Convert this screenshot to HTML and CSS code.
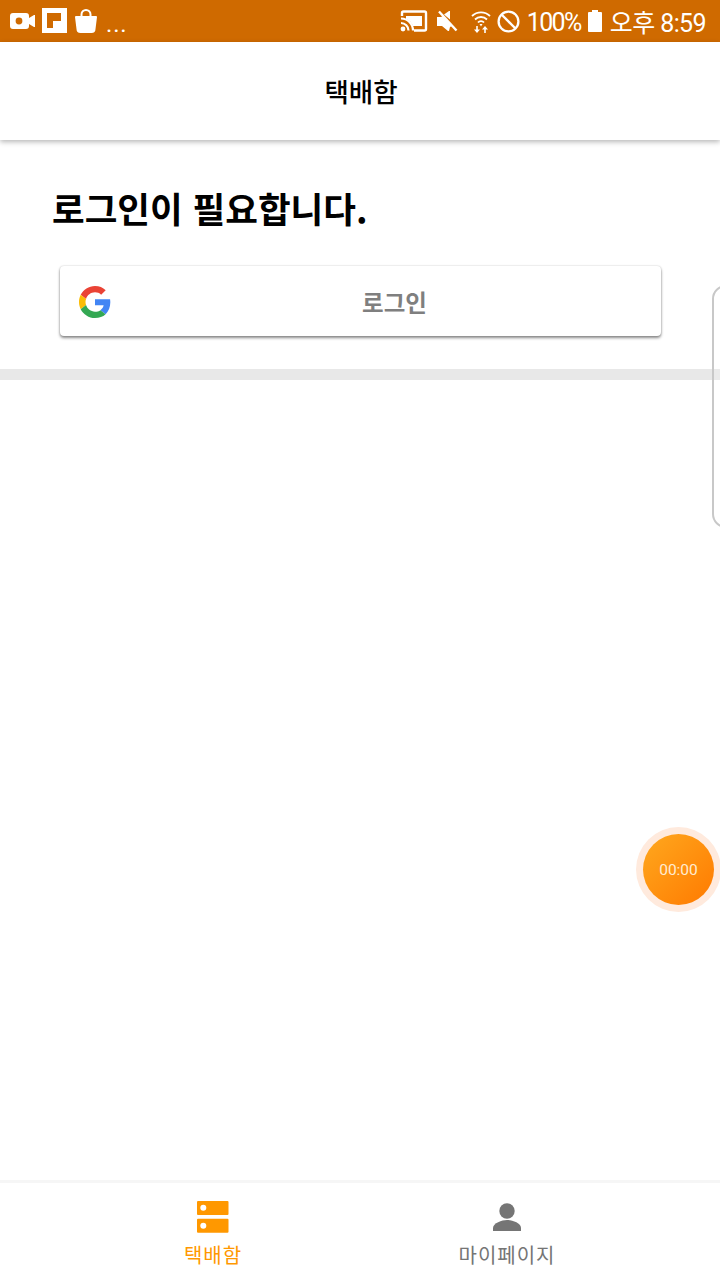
FILE: index.html
```html
<!DOCTYPE html>
<html lang="ko">
<head>
<meta charset="utf-8">
<title>택배함</title>
<link rel="stylesheet" href="styles.css">
</head>
<body>
<div class="app">
  <div class="status">
    <div class="status-left">
      <svg class="i-video" width="26" height="18" viewBox="0 0 26 18"><path fill="#fff" d="M3 1h13a3 3 0 0 1 3 3v2l5-3h1v12h-1l-5-3v2a3 3 0 0 1-3 3H3a3 3 0 0 1-3-3V4a3 3 0 0 1 3-3z"/><circle cx="9" cy="9" r="3.400" fill="#cf6a00"/></svg>
      <svg class="i-flip" width="25" height="25" viewBox="0 0 25 25"><path fill="#fff" fill-rule="evenodd" d="M0 0h25v25H0zM5 5v15h6v-7h8V5z"/></svg>
      <svg class="i-bag" width="22" height="24" viewBox="0 0 22 24"><path fill="none" stroke="#fff" stroke-width="2" d="M6.500 8V5.500a4.500 4.500 0 0 1 9 0V8"/><path fill="#fff" d="M1 7h20a1 1 0 0 1 1 1l-1.500 12a4 4 0 0 1-4 4h-11a4 4 0 0 1-4-4L0 8a1 1 0 0 1 1-1z"/></svg>
      <span class="dots">...</span>
    </div>
    <div class="status-right">
      <svg width="28" height="22" viewBox="0 0 28 22"><path fill="none" stroke="#fff" stroke-width="2.400" d="M2 6V3a1.500 1.500 0 0 1 1.500-1.500h21A1.500 1.500 0 0 1 26 3v16a1.500 1.500 0 0 1-1.500 1.500H14"/><path fill="#fff" d="M6 6h16v10H13a12 12 0 0 0-7-7z"/><path fill="none" stroke="#fff" stroke-width="2.200" d="M1 8.500a12 12 0 0 1 12 12M1 13a7.500 7.500 0 0 1 7.500 7.500"/><circle cx="3" cy="19" r="2.400" fill="#fff"/></svg>
      <svg class="i-mute" width="23" height="22" viewBox="0 0 23 22"><path fill="#fff" d="M1 7h4l2-1 9 10-2 1-1 4-1 0-6-5H1z"/><path fill="#fff" d="M8 4.500L13 1h1v8.500z"/><path stroke="#fff" stroke-width="2.400" d="M3 1.500l17.500 19"/></svg>
      <svg class="i-wifi" width="20" height="24" viewBox="0 0 20 24"><g fill="none" stroke="#fff" stroke-width="1.800"><path d="M1 7a13 13 0 0 1 18 0"/><path d="M4 10.500a8.500 8.500 0 0 1 12 0"/><path d="M7 13.500a4 4 0 0 1 6 0"/></g><path fill="#fff" d="M8.500 15h3L10 17.500zM5.200 17h1.600v3.500H9L6 24l-3-3.500h2.200zM14 17l3 3.500h-2.200V24h-1.600v-3.500H11z"/></svg>
      <svg class="i-block" width="23" height="23" viewBox="0 0 23 23"><circle cx="11.500" cy="11.500" r="9.900" fill="none" stroke="#fff" stroke-width="2.300"/><path stroke="#fff" stroke-width="2.300" d="M4.500 4.500l14 14"/></svg>
      <span class="pct">100%</span>
      <svg class="i-batt" width="14" height="22" viewBox="0 0 14 22"><path fill="#fff" d="M4 0h6v2h3a1 1 0 0 1 1 1v18a1 1 0 0 1-1 1H1a1 1 0 0 1-1-1V3a1 1 0 0 1 1-1h3z"/></svg>
      <span class="clock">오후 8:59</span>
    </div>
  </div>

  <header class="topbar">택배함</header>

  <section class="login">
    <h1 class="login-title">로그인이 필요합니다.</h1>
    <button class="google-btn" type="button">
      <svg class="g-logo" width="32" height="32" viewBox="0 0 48 48">
        <path fill="#EA4335" d="M24 9.500c3.540 0 6.710 1.220 9.210 3.600l6.850-6.850C35.900 2.380 30.470 0 24 0 14.620 0 6.510 5.380 2.560 13.220l7.980 6.190C12.430 13.720 17.740 9.500 24 9.500z"/>
        <path fill="#4285F4" d="M46.980 24.550c0-1.570-.15-3.090-.38-4.550H24v9.020h12.940c-.58 2.960-2.260 5.480-4.780 7.180l7.730 6c4.510-4.180 7.090-10.360 7.090-17.650z"/>
        <path fill="#FBBC05" d="M10.530 28.590c-.48-1.450-.76-2.990-.76-4.590s.27-3.140.76-4.590l-7.980-6.190C.92 16.460 0 20.120 0 24c0 3.880.92 7.540 2.560 10.780l7.970-6.190z"/>
        <path fill="#34A853" d="M24 48c6.480 0 11.930-2.130 15.890-5.810l-7.730-6c-2.150 1.450-4.920 2.300-8.160 2.300-6.260 0-11.570-4.220-13.470-9.910l-7.980 6.190C6.510 42.620 14.620 48 24 48z"/>
      </svg>
      <span class="google-label">로그인</span>
    </button>
  </section>
  <div class="divider"></div>

  <main class="content"></main>

  <nav class="tabbar">
    <div class="tab tab-active">
      <svg width="34" height="34" viewBox="0 0 34 34"><path fill="#ff9800" fill-rule="evenodd" d="M2 1h29.500a1 1 0 0 1 1 1v12a1 1 0 0 1-1 1H2a1 1 0 0 1-1-1V2a1 1 0 0 1 1-1zm5.300 3.700a3 3 0 1 0 0 6 3 3 0 0 0 0-6zM2 18.700h29.500a1 1 0 0 1 1 1v12a1 1 0 0 1-1 1H2a1 1 0 0 1-1-1v-12a1 1 0 0 1 1-1zm5.300 4a3 3 0 1 0 0 6 3 3 0 0 0 0-6z"/></svg>
      <span class="tab-label">택배함</span>
    </div>
    <div class="tab">
      <svg width="34" height="34" viewBox="0 0 34 34"><circle cx="17" cy="11" r="7.700" fill="#757575"/><path fill="#757575" d="M3 31v-3c0-5 9-8 14-8s14 3 14 8v3z"/></svg>
      <span class="tab-label">마이페이지</span>
    </div>
  </nav>

  <div class="edge-handle"></div>
  <div class="timer"><div class="timer-core">00:00</div></div>
</div>
</body>
</html>
```

FILE: styles.css
```css
* { box-sizing: border-box; }
html, body { margin: 0; padding: 0; }
body {
  width: 720px;
  height: 1280px;
  overflow: hidden;
  background: #fff;
  font-family: "Noto Sans CJK KR", "Noto Sans", sans-serif;
}
.app {
  position: relative;
  width: 720px;
  height: 1280px;
  display: flex;
  flex-direction: column;
  overflow: hidden;
}
.status {
  flex: 0 0 42px;
  background: #cf6a00;
  color: #fff;
  display: flex;
  align-items: center;
  justify-content: space-between;
  padding: 0 14px 0 10px;
}
.status-left { display: flex; align-items: center; gap: 6px; }
.i-flip { margin-top: -1px; }
.i-bag { margin-left: 2px; }
.dots { font: 24px/1 "Roboto", sans-serif; margin-left: 3px; padding-top: 5px; letter-spacing: 0.8px; }
.status-right { display: flex; align-items: center; }
.i-mute { margin-left: 8px; }
.i-wifi { margin-left: 12px; }
.i-block { margin-left: 6px; }
.pct { font: 25px/1 "Roboto", sans-serif; margin-left: 7px; padding-top: 2px; letter-spacing: -1.600px; }
.i-batt { margin-left: 7px; }
.clock { font: 25px/1 "Roboto", "Noto Sans CJK KR", sans-serif; margin-left: 8px; padding-top: 4px; letter-spacing: -0.600px; }
.topbar {
  flex: 0 0 98px;
  background: #fff;
  display: flex;
  align-items: center;
  justify-content: center;
  padding: 0 0 2px 2px;
  font-size: 26.500px;
  font-weight: 500;
  color: #000;
  box-shadow: 0 2px 5px rgba(0, 0, 0, 0.28);
  position: relative;
  z-index: 1;
}
.login {
  flex: 0 0 229px;
  padding: 43px 60px 0;
}
.login-title {
  margin: 0 0 0 -8px;
  font-size: 35.500px;
  line-height: 50px;
  font-weight: 700;
  color: #000;
}
.google-btn {
  display: flex;
  align-items: center;
  width: 601px;
  height: 70px;
  margin-top: 33px;
  padding: 0 19px;
  border: 0;
  border-radius: 4px;
  background: #fff;
  box-shadow: 0 0 2px rgba(0, 0, 0, 0.2), 0 2px 3px rgba(0, 0, 0, 0.45);
  font-family: inherit;
}
.g-logo { flex: none; margin-top: 2px; }
.google-label {
  flex: 1;
  text-align: center;
  font-size: 23.500px;
  font-weight: 700;
  color: #7f7f7f;
  padding: 2px 0 0 36px;
}
.divider { flex: 0 0 11px; background: #e8e8e8; }
.content { flex: 1; background: #fff; }
.tabbar {
  flex: 0 0 100px;
  display: grid;
  grid-template-columns: 426px 162px;
  border-top: 3px solid #f6f6f6;
  background: #fff;
}
.tab {
  display: flex;
  flex-direction: column;
  align-items: center;
  padding-top: 17px;
  color: #757575;
}
.tab-label { font-size: 20px; line-height: 30px; margin-top: 6px; letter-spacing: 1px; }
.tab-active { color: #ff9800; }
.edge-handle {
  position: absolute;
  left: 712px;
  top: 285px;
  width: 30px;
  height: 243px;
  border: 2px solid #c8c8c8;
  border-radius: 14px;
  background: rgba(255, 255, 255, 0.12);
}
.timer {
  position: absolute;
  left: 636px;
  top: 827px;
  width: 85px;
  height: 85px;
  border-radius: 50%;
  background: #ffeadd;
  display: flex;
  align-items: center;
  justify-content: center;
}
.timer-core {
  width: 71px;
  height: 71px;
  border-radius: 50%;
  background: linear-gradient(135deg, #ffa81e, #ff7a00);
  color: #ffecd2;
  font: 15.500px/73px "Roboto", sans-serif;
  text-align: center;
}
```
